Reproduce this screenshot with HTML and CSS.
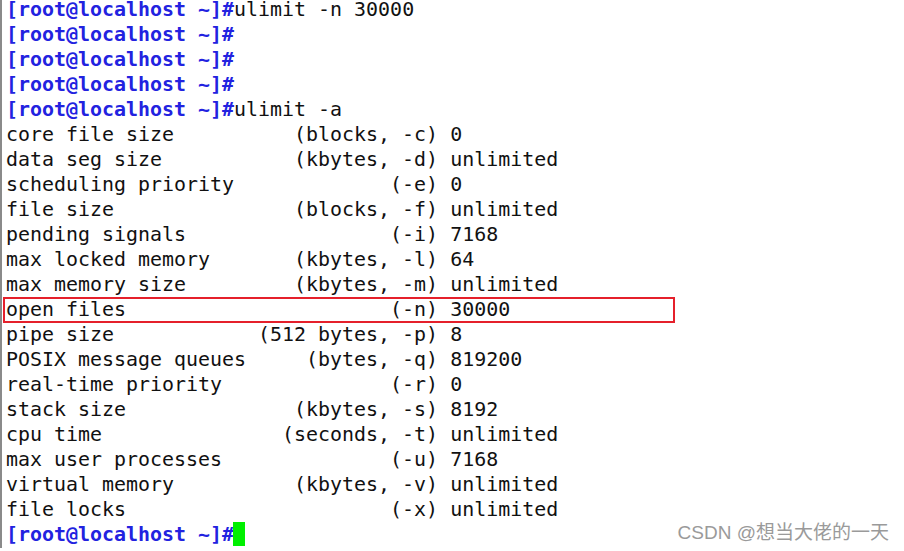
FILE: index.html
```html
<!DOCTYPE html>
<html lang="zh">
<head>
    <meta charset="UTF-8">
    <meta name="viewport" content="width=device-width, initial-scale=1.0">
    <title>ulimit -a</title>
    <link rel="stylesheet" href="styles.css">
</head>
<body>
    <div class="terminal">
        <div class="line"><span class="prompt">[root@localhost ~]#</span>ulimit -n 30000</div>
        <div class="line"><span class="prompt">[root@localhost ~]#</span></div>
        <div class="line"><span class="prompt">[root@localhost ~]#</span></div>
        <div class="line"><span class="prompt">[root@localhost ~]#</span></div>
        <div class="line"><span class="prompt">[root@localhost ~]#</span>ulimit -a</div>
        <div class="line">core file size          (blocks, -c) 0</div>
        <div class="line">data seg size           (kbytes, -d) unlimited</div>
        <div class="line">scheduling priority             (-e) 0</div>
        <div class="line">file size               (blocks, -f) unlimited</div>
        <div class="line">pending signals                 (-i) 7168</div>
        <div class="line">max locked memory       (kbytes, -l) 64</div>
        <div class="line">max memory size         (kbytes, -m) unlimited</div>
        <div class="line marked">open files                      (-n) 30000</div>
        <div class="line">pipe size            (512 bytes, -p) 8</div>
        <div class="line">POSIX message queues     (bytes, -q) 819200</div>
        <div class="line">real-time priority              (-r) 0</div>
        <div class="line">stack size              (kbytes, -s) 8192</div>
        <div class="line">cpu time               (seconds, -t) unlimited</div>
        <div class="line">max user processes              (-u) 7168</div>
        <div class="line">virtual memory          (kbytes, -v) unlimited</div>
        <div class="line">file locks                      (-x) unlimited</div>
        <div class="line"><span class="prompt">[root@localhost ~]#</span><span class="cursor"> </span></div>
    </div>
    <div class="watermark">CSDN @想当大佬的一天</div>
</body>
</html>
```

FILE: styles.css
```css
body {
    margin: 0;
    background-color: #fff;
    width: 904px;
    height: 551px;
    overflow: hidden;
    position: relative;
}

.terminal {
    border-left: 2px solid #8a8a8a;
    height: 551px;
    padding-left: 4px;
    margin-top: -3px;
    font-family: "DejaVu Sans Mono", monospace;
    font-size: 19.95px;
    line-height: 25px;
    color: #111;
}

.line {
    white-space: pre;
    height: 25px;
}

.prompt {
    color: #2222e0;
    font-weight: bold;
}

.cursor {
    display: inline-block;
    width: 12px;
    height: 24px;
    vertical-align: top;
    background-color: #00f000;
    margin-left: -1px;
}

.marked {
    position: relative;
}

.marked::after {
    content: "";
    position: absolute;
    left: -3px;
    top: 0;
    width: 668px;
    height: 22px;
    border: 2px solid #e5202b;
}

.watermark {
    position: absolute;
    right: 15px;
    top: 517px;
    font-family: "Liberation Sans", "Noto Sans CJK SC", sans-serif;
    font-size: 19px;
    color: #9a9a9a;
}
```
